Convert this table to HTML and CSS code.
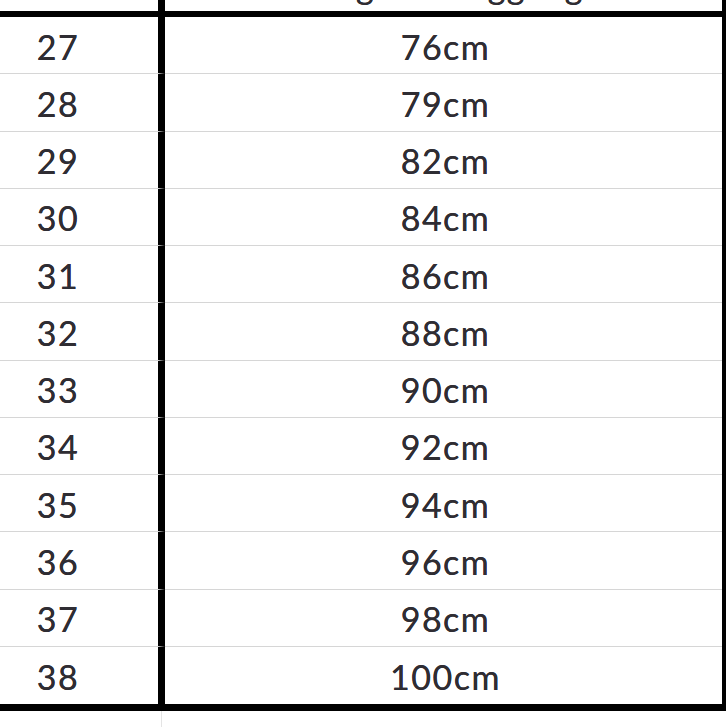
FILE: index.html
```html
<!DOCTYPE html>
<html lang="id">
<head>
<meta charset="utf-8">
<title>Ukuran</title>
<link rel="stylesheet" href="styles.css">
</head>
<body>
<div class="sheet">
  <div class="grid">
    <div class="cell c1 head">Ukuran</div><div class="cell c2 head">Lingkar Pinggang</div>
    <div class="cell c1">27</div><div class="cell c2">76cm</div>
    <div class="cell c1">28</div><div class="cell c2">79cm</div>
    <div class="cell c1">29</div><div class="cell c2">82cm</div>
    <div class="cell c1">30</div><div class="cell c2">84cm</div>
    <div class="cell c1">31</div><div class="cell c2">86cm</div>
    <div class="cell c1">32</div><div class="cell c2">88cm</div>
    <div class="cell c1">33</div><div class="cell c2">90cm</div>
    <div class="cell c1">34</div><div class="cell c2">92cm</div>
    <div class="cell c1">35</div><div class="cell c2">94cm</div>
    <div class="cell c1">36</div><div class="cell c2">96cm</div>
    <div class="cell c1">37</div><div class="cell c2">98cm</div>
    <div class="cell c1 last">38</div><div class="cell c2 last">100cm</div>
  </div>
  <div class="below"><div class="b1"></div><div class="b2"></div></div>
</div>
</body>
</html>
```
FILE: styles.css
```css
html, body {
  margin: 0;
  padding: 0;
  background: #fff;
  overflow: hidden;
}
.sheet {
  width: 727px;
  height: 727px;
  overflow: hidden;
  font-family: Lato, "Open Sans", sans-serif;
  color: #2f2d33;
}
.grid {
  margin-top: -23px;
  display: grid;
  grid-template-columns: 165px 557px;
  grid-template-rows: 40px repeat(12, 57.25px);
  width: 722px;
  border-right: 4px solid #000;
  border-bottom: 7px solid #000;
}
.cell {
  box-sizing: border-box;
  display: flex;
  align-items: center;
  justify-content: center;
  font-size: 34px;
  letter-spacing: 1.5px;
  padding-top: 2px;
  border-bottom: 1px solid #d6d6d6;
  text-shadow: 0 0 0.4px #2f2d33;
}
.c1 {
  border-right: 7px solid #000;
  padding-right: 42px;
}
.c2 {
  padding-left: 4px;
}
.head {
  border-bottom: 6px solid #000;
  align-items: flex-start;
  padding-top: 0;
  line-height: 40px;
  margin-top: -11px;
}
.last {
  border-bottom: none;
}
.below {
  display: flex;
  height: 20px;
}
.b1 {
  width: 161px;
  border-right: 1px solid #e4e4e4;
}
.b2 {
  flex: 1;
}
```
